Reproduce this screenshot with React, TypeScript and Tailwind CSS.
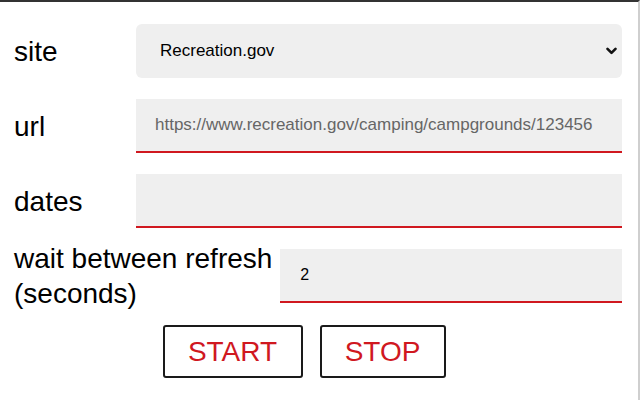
import React from "react";

export default function App() {
  return (
    <div className="w-[640px] h-[400px] bg-white border-t-2 border-t-[#333333] border-r-2 border-r-[#cfcfcf] overflow-hidden font-['Liberation_Sans',Arial,sans-serif] text-black">
      <div className="pl-[14px] pr-[16px]">
        {/* site */}
        <div className="flex items-center mt-[22px]">
          <label className="min-w-[122px] pr-[7px] text-[28px] leading-[35px]">site</label>
          <div className="relative flex-1">
            <select
              defaultValue="recreation"
              className="w-full h-[54px] appearance-none bg-[#efefef] rounded-[6px] pl-[24px] pr-[30px] text-[17px] text-black outline-none"
            >
              <option value="recreation">Recreation.gov</option>
            </select>
            {/* chevron */}
            <svg
              className="absolute right-[5px] top-[23px] w-[11px] h-[8px] pointer-events-none"
              viewBox="0 0 11 8"
              fill="none"
              stroke="#111111"
              strokeWidth={2.6}
              strokeLinecap="round"
              strokeLinejoin="round"
            >
              <path d="M1.5 1.8 L5.5 5.8 L9.5 1.8" />
            </svg>
          </div>
        </div>

        {/* url */}
        <div className="flex items-center mt-[21px]">
          <label className="min-w-[122px] pr-[7px] text-[28px] leading-[35px]">url</label>
          <input
            className="flex-1 min-w-0 h-[54px] bg-[#efefef] border-b-2 border-[#d0181f] pl-[19px] text-[17px] text-black placeholder:text-[#666666] outline-none"
            placeholder="https://www.recreation.gov/camping/campgrounds/123456"
          />
        </div>

        {/* dates */}
        <div className="flex items-center mt-[21px]">
          <label className="min-w-[122px] pr-[7px] text-[28px] leading-[35px]">dates</label>
          <input className="flex-1 min-w-0 h-[54px] bg-[#efefef] border-b-2 border-[#d0181f] pl-[19px] text-[17px] outline-none" />
        </div>

        {/* wait */}
        <div className="flex items-center mt-[13px]">
          <label className="min-w-[122px] pr-[8px] text-[28px] leading-[35px]">
            wait between refresh
            <br />
            (seconds)
          </label>
          <input
            defaultValue="2"
            className="flex-1 min-w-0 h-[54px] bg-[#efefef] border-b-2 border-[#d0181f] pl-[20px] text-[16px] text-black outline-none"
          />
        </div>

        {/* buttons */}
        <div className="flex justify-center gap-[17px] mt-[14px] pr-[28px]">
          <button className="w-[140px] h-[53px] border-2 border-[#1a1a1a] rounded-[3px] bg-white text-[28px] text-[#d0181f]">
            START
          </button>
          <button className="w-[126px] h-[53px] border-2 border-[#1a1a1a] rounded-[3px] bg-white text-[28px] text-[#d0181f]">
            STOP
          </button>
        </div>
      </div>
    </div>
  );
}
